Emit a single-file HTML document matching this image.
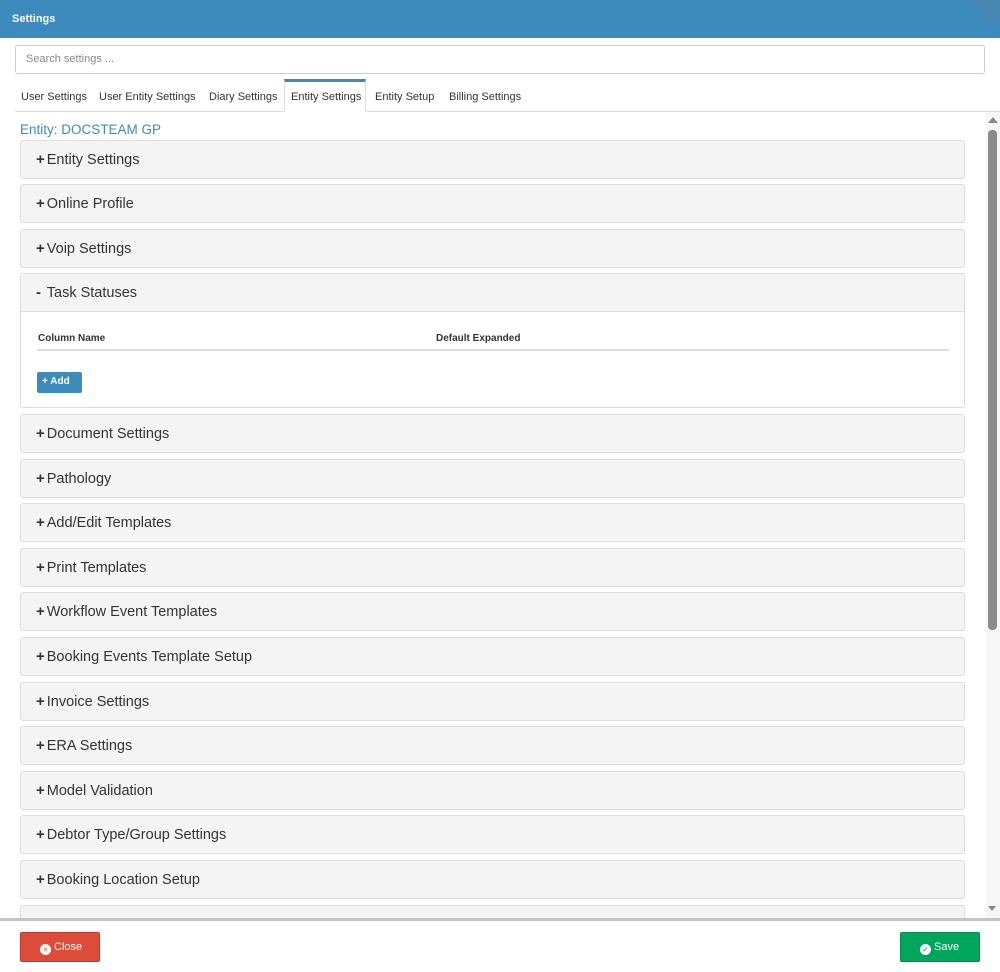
<!DOCTYPE html>
<html><head><style>
*{box-sizing:border-box;margin:0;padding:0}
body{width:1000px;height:972px;background:#fff;font-family:"Liberation Sans",sans-serif;position:relative;overflow:hidden;color:#333}
.hdr{position:absolute;left:0;top:0;width:1000px;height:38px;background:#3d8bbd;color:#fff;font-weight:bold;font-size:11px;padding:13px 0 0 12px}
.circ{position:absolute;right:-22px;top:-30px;width:50px;height:50px;border-radius:50%;background:#4f86a8;opacity:.6}
.search{position:absolute;left:15px;top:45px;width:970px;height:29px;border:1px solid #ccc;border-radius:3px;font-size:11px;color:#888;padding:7px 10px}
.tabs{position:absolute;left:15px;top:79px;width:985px;height:33px;border-bottom:1px solid #ddd}
.tab{position:absolute;top:0;height:33px;font-size:11px;padding-top:12px;color:#333}
.tab.act{border:1px solid #ddd;border-top:3px solid #3d8bbd;border-bottom:1px solid #fff;background:#fff;padding-top:9px}
.ent{position:absolute;left:20px;top:122px;font-size:13.5px;color:#3d8bbd}
.p{position:absolute;left:20px;width:945px;height:39px;background:#f4f4f4;border:1px solid #ddd;border-radius:3px;font-size:14.5px;padding:10px 0 0 15px;color:#333}
.p b{font-size:15px;margin-right:2px}
.open{height:135px;background:#fff}
.open .ph{position:absolute;left:0;top:0;width:943px;height:38px;background:#f4f4f4;border-bottom:1px solid #ddd;padding:10px 0 0 15px;border-radius:3px 3px 0 0}
.th{position:absolute;top:59px;font-size:10px;font-weight:bold}
.line{position:absolute;left:16px;top:75px;width:912px;height:2px;background:#ddd}
.add{position:absolute;left:16px;top:98px;width:45px;height:21px;background:#3d8bbd;border-radius:2px;color:#fff;font-size:10px;font-weight:bold;padding:4px 0 0 5px}
.sb{position:absolute;left:986px;top:112px;width:14px;height:806px;background:#f6f6f6}
.thumb{position:absolute;left:988px;top:130px;width:9px;height:500px;background:#8a8a8a;border-radius:4px}
.foot{position:absolute;left:0;top:918px;width:1000px;height:54px;background:#fff;border-top:3px solid #c4c4c4}
.btn{position:absolute;top:11px;width:80px;height:30px;border-radius:2px;color:#fff;font-size:11px;padding:8px 0 0 19px}
.btn i{display:inline-block;width:11px;height:11px;border-radius:50%;background:#fff;vertical-align:-2px;margin-right:3px;font-style:normal;font-size:8px;text-align:center;line-height:11px}
</style></head><body>
<div class="hdr">Settings<div class="circ"></div></div>
<div class="search">Search settings ...</div>
<div class="tabs">
<div class="tab" style="left:6px">User Settings</div>
<div class="tab" style="left:84px">User Entity Settings</div>
<div class="tab" style="left:194px">Diary Settings</div>
<div class="tab act" style="left:269px;width:82px;padding-left:6px">Entity Settings</div>
<div class="tab" style="left:360px">Entity Setup</div>
<div class="tab" style="left:434px">Billing Settings</div>
</div>
<div class="ent">Entity: DOCSTEAM GP</div>
<div class="p" style="top:140px"><b>+</b>Entity Settings</div>
<div class="p" style="top:184px"><b>+</b>Online Profile</div>
<div class="p" style="top:229px"><b>+</b>Voip Settings</div>
<div class="p open" style="top:273px;padding:0"><div class="ph"><b>-</b> Task Statuses</div>
<div class="th" style="left:17px">Column Name</div><div class="th" style="left:415px">Default Expanded</div>
<div class="line"></div><div class="add">+ Add</div></div>
<div class="p" style="top:414px"><b>+</b>Document Settings</div>
<div class="p" style="top:459px"><b>+</b>Pathology</div>
<div class="p" style="top:503px"><b>+</b>Add/Edit Templates</div>
<div class="p" style="top:548px"><b>+</b>Print Templates</div>
<div class="p" style="top:592px"><b>+</b>Workflow Event Templates</div>
<div class="p" style="top:637px"><b>+</b>Booking Events Template Setup</div>
<div class="p" style="top:682px"><b>+</b>Invoice Settings</div>
<div class="p" style="top:726px"><b>+</b>ERA Settings</div>
<div class="p" style="top:771px"><b>+</b>Model Validation</div>
<div class="p" style="top:815px"><b>+</b>Debtor Type/Group Settings</div>
<div class="p" style="top:860px"><b>+</b>Booking Location Setup</div>
<div class="p" style="top:905px"></div>
<div class="sb"></div><div class="thumb"></div>
<div style="position:absolute;left:988px;top:117px;width:0;height:0;border-left:5px solid transparent;border-right:5px solid transparent;border-bottom:6px solid #888"></div>
<div style="position:absolute;left:988px;top:906px;width:0;height:0;border-left:4px solid transparent;border-right:4px solid transparent;border-top:5px solid #888"></div>
<div class="foot">
<div class="btn" style="left:20px;background:#dd4b39;border:1px solid #c23b2a"><i style="color:#dd4b39">×</i>Close</div>
<div class="btn" style="left:900px;background:#00a65a;border:1px solid #008d4c"><i style="color:#00a65a">✓</i>Save</div>
</div>
</body></html>
